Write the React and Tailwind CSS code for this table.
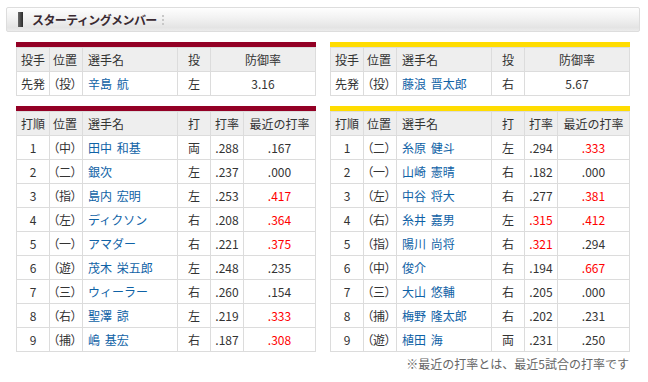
import React from "react";

const RED = "text-[#ff0000]";

const pitchers = {
  left: { name: "辛島 航", hand: "左", era: "3.16" },
  right: { name: "藤浪 晋太郎", hand: "右", era: "5.67" },
};

const lineups = {
  left: [
    ["1", "中", "田中 和基", "両", ".288", ".167"],
    ["2", "二", "銀次", "左", ".237", ".000"],
    ["3", "指", "島内 宏明", "左", ".253", ".417"],
    ["4", "左", "ディクソン", "右", ".208", ".364"],
    ["5", "一", "アマダー", "右", ".221", ".375"],
    ["6", "遊", "茂木 栄五郎", "左", ".248", ".235"],
    ["7", "三", "ウィーラー", "右", ".260", ".154"],
    ["8", "右", "聖澤 諒", "左", ".219", ".333"],
    ["9", "捕", "嶋 基宏", "右", ".187", ".308"],
  ],
  right: [
    ["1", "二", "糸原 健斗", "左", ".294", ".333"],
    ["2", "一", "山崎 憲晴", "右", ".182", ".000"],
    ["3", "左", "中谷 将大", "右", ".277", ".381"],
    ["4", "右", "糸井 嘉男", "左", ".315", ".412"],
    ["5", "指", "陽川 尚将", "右", ".321", ".294"],
    ["6", "中", "俊介", "右", ".194", ".667"],
    ["7", "三", "大山 悠輔", "右", ".205", ".000"],
    ["8", "捕", "梅野 隆太郎", "右", ".202", ".231"],
    ["9", "遊", "植田 海", "両", ".231", ".250"],
  ],
};

const isHigh = (v) => parseFloat(v) >= 0.3;

const th = "h-[23px] border border-[#dcdcdc] bg-[#eeeeee] font-normal p-0 leading-[23px]";
const td = "h-[23px] border border-[#dcdcdc] bg-white p-0 leading-[23px]";

function Bar({ color }) {
  return <div className={`h-[5px] ${color}`} />;
}

function PitcherTable({ data, color }) {
  return (
    <div className="w-[300px]">
      <Bar color={color} />
      <table className="table-fixed border-collapse w-[300px]">
        <colgroup>
          <col className="w-[33px]" />
          <col className="w-[33px]" />
          <col className="w-[95px]" />
          <col className="w-[33px]" />
          <col />
        </colgroup>
        <thead>
          <tr>
            <th className={`${th} text-center`}>投手</th>
            <th className={`${th} text-left pl-[3px]`}>位置</th>
            <th className={`${th} text-left pl-[5px]`}>選手名</th>
            <th className={`${th} text-center`}>投</th>
            <th className={`${th} text-center`}>防御率</th>
          </tr>
        </thead>
        <tbody>
          <tr>
            <td className={`${td} text-center`}>先発</td>
            <td className={`${td} text-left pl-[3px] whitespace-nowrap [font-feature-settings:'palt']`}>（投）</td>
            <td className={`${td} text-left pl-[5px] text-[#0f62a6] whitespace-nowrap [word-spacing:2px]`}>{data.name}</td>
            <td className={`${td} text-center`}>{data.hand}</td>
            <td className={`${td} text-center`}>{data.era}</td>
          </tr>
        </tbody>
      </table>
    </div>
  );
}

function LineupTable({ rows, color }) {
  return (
    <div className="w-[300px]">
      <Bar color={color} />
      <table className="table-fixed border-collapse w-[300px]">
        <colgroup>
          <col className="w-[33px]" />
          <col className="w-[33px]" />
          <col className="w-[95px]" />
          <col className="w-[33px]" />
          <col className="w-[33px]" />
          <col />
        </colgroup>
        <thead>
          <tr>
            <th className={`${th} text-center`}>打順</th>
            <th className={`${th} text-left pl-[3px]`}>位置</th>
            <th className={`${th} text-left pl-[5px]`}>選手名</th>
            <th className={`${th} text-center`}>打</th>
            <th className={`${th} text-center`}>打率</th>
            <th className={`${th} text-center whitespace-nowrap`}>最近の打率</th>
          </tr>
        </thead>
        <tbody>
          {rows.map((r) => (
            <tr key={r[0]}>
              <td className={`${td} text-center`}>{r[0]}</td>
              <td className={`${td} text-left pl-[3px] whitespace-nowrap [font-feature-settings:'palt']`}>（{r[1]}）</td>
              <td className={`${td} text-left pl-[5px] text-[#0f62a6] whitespace-nowrap [word-spacing:2px]`}>{r[2]}</td>
              <td className={`${td} text-center`}>{r[3]}</td>
              <td className={`${td} text-center ${isHigh(r[4]) ? RED : ""}`}>{r[4]}</td>
              <td className={`${td} text-center ${isHigh(r[5]) ? RED : ""}`}>{r[5]}</td>
            </tr>
          ))}
        </tbody>
      </table>
    </div>
  );
}

export default function App() {
  return (
    <div className="w-[648px] h-[382px] bg-white text-[12px] text-[#333333] font-['Noto_Sans_CJK_JP','Noto_Sans',sans-serif] overflow-hidden">
      <div className="pt-[7px] pl-[6px] pr-[8px]">
        <div className="h-[25px] border border-[#dddddd] rounded-[2px] bg-[linear-gradient(to_bottom,#fefefe_0%,#f3f3f3_40%,#e4e4e4_85%,#ececec_100%)] flex items-center pl-[11px]">
          <div className="w-[5px] h-[15px] bg-[linear-gradient(to_right,#6a6a6a,#2a2a2a)]" />
          <span className="ml-[9px] text-[12px] font-bold text-[#3a2a32] tracking-[-0.6px] leading-[14px]">
            スターティングメンバー
          </span>
          <div className="ml-[5px] h-[10px] border-l-2 border-dotted border-[#c8c8c8]" />
        </div>
      </div>
      <div className="flex gap-[14px] pl-[16px] mt-[10px]">
        <div className="flex flex-col gap-[10px]">
          <PitcherTable data={pitchers.left} color="bg-[#930025]" />
          <LineupTable rows={lineups.left} color="bg-[#930025]" />
        </div>
        <div className="flex flex-col">
          <PitcherTable data={pitchers.right} color="bg-[#ffdc00]" />
          <div className="mt-[10px]">
            <LineupTable rows={lineups.right} color="bg-[#ffdc00]" />
          </div>
          <div className="mt-[3px] pr-[1px] text-right text-[12px] leading-[18px] text-[#666666] whitespace-nowrap">
            ※最近の打率とは、最近5試合の打率です
          </div>
        </div>
      </div>
    </div>
  );
}
